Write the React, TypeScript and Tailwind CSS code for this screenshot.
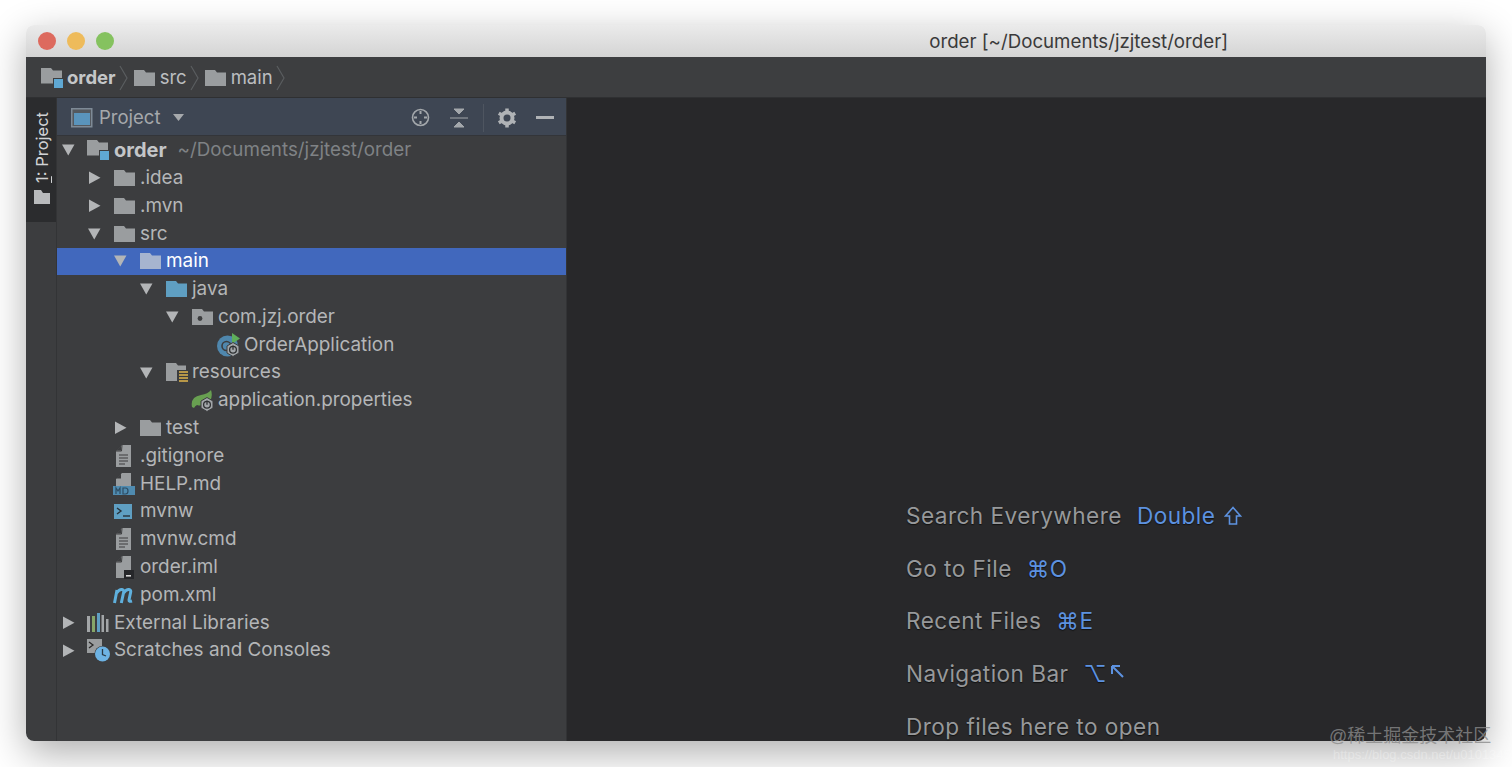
function Arrow({ open }: { open?: boolean }) {
  return (
    <svg width="14" height="14" viewBox="0 0 14 14" className="shrink-0">
      {open ? <path d="M0 1.500h12.500L6.250 12.500z" fill="#b3b5b7" /> : <path d="M1 .5v12.500L12.500 6.750z" fill="#b3b5b7" />}
    </svg>
  );
}

function Folder({ color = "#9a9d9f" }: { color?: string }) {
  return (
    <svg width="22" height="18" viewBox="0 0 22 18" className="shrink-0">
      <path d="M1 1h10l2 2.500h9v13.500H1z" fill={color} />
    </svg>
  );
}

function ModuleFolder() {
  return (
    <svg width="22" height="22" viewBox="0 0 22 22" className="shrink-0">
      <path d="M0 1h10l2 2.500h9v13H0z" fill="#9a9d9f" />
      <rect x="12" y="11" width="10" height="10" fill="#3c3d3f" />
      <rect x="13" y="12" width="9" height="9" fill="#5fa8d3" />
    </svg>
  );
}

function PackageFolder() {
  return (
    <svg width="22" height="18" viewBox="0 0 22 18" className="shrink-0">
      <path d="M1 1h10l2 2.500h9v13.500H1z" fill="#9a9d9f" />
      <circle cx="9" cy="10.500" r="2.400" fill="#3c3d3f" />
    </svg>
  );
}

function ResourceFolder() {
  return (
    <svg width="24" height="22" viewBox="0 0 24 22" className="shrink-0">
      <path d="M1 1h10l2 2.500h8v15.500H1z" fill="#9a9d9f" />
      <rect x="12" y="8" width="11" height="14" fill="#3c3d3f" />
      <path d="M14 10h9M14 13h9M14 16h9M14 19h9" stroke="#e0b54c" strokeWidth="1.600" />
    </svg>
  );
}

function Doc({ badge }: { badge?: boolean }) {
  return (
    <svg width="22" height="24" viewBox="0 0 22 24" className="shrink-0">
      <path d="M3 7l6-6h9v22H3z" fill="#9a9d9f" />
      <path d="M8 1.500v5H3z" fill="#3c3d3f" />
      <path d="M9 1l-.5 6H3" fill="none" stroke="#3c3d3f" strokeWidth="1" />
      {badge ? (
        <>
          <rect x="11" y="15" width="10" height="9" fill="#26272a" />
          <rect x="13" y="20" width="5" height="1.600" fill="#d8d8d8" />
        </>
      ) : (
        <path d="M6 11h9M6 14h9M6 17h9M6 20h6" stroke="#3c3d3f" strokeWidth="1.200" />
      )}
    </svg>
  );
}

function MdFile() {
  return (
    <svg width="22" height="24" viewBox="0 0 22 24" className="shrink-0">
      <path d="M3 7l6-6h9v13H3z" fill="#9a9d9f" />
      <path d="M8 1.500v5H3z" fill="#3c3d3f" />
      <rect x="0" y="14" width="22" height="9" fill="#4f8bb0" />
      <path d="M3 22v-6l2 3 2-3v6M10 16v6h2.500q2.500 0 2.500-3t-2.500-3z" fill="none" stroke="#2f4d63" strokeWidth="1.200" />
    </svg>
  );
}

function ShellFile() {
  return (
    <svg width="22" height="18" viewBox="0 0 22 18" className="shrink-0">
      <rect x="1" y="1" width="18" height="15" fill="#5f9fc2" />
      <path d="M4 5l4 3-4 3" fill="none" stroke="#27323a" strokeWidth="1.400" />
      <path d="M10 13h7" stroke="#27323a" strokeWidth="1.400" />
    </svg>
  );
}

function MavenIcon() {
  return (
    <svg width="22" height="18" viewBox="0 0 22 18" className="shrink-0">
      <path
        d="M1.500 17l2.500-13M3.500 7q3-4 5.500-3.500t1.500 3.500l-2.200 10M10.500 7q3-4 5.500-3.500t1.500 3.500l-1.500 7q-.3 2 3 1"
        fill="none"
        stroke="#5fb0dd"
        strokeWidth="3"
      />
    </svg>
  );
}

function SpringBadge() {
  return (
    <>
      <polygon points="16,9.500 22,13 22,20 16,23.500 10,20 10,13" fill="#a2a6a9" stroke="#3c3d3f" strokeWidth="1" />
      <circle cx="16" cy="16.800" r="3.400" fill="none" stroke="#2f3133" strokeWidth="1.300" />
      <path d="M16 12.500v4.300" stroke="#2f3133" strokeWidth="1.300" />
    </>
  );
}

function SpringApp() {
  return (
    <svg width="24" height="24" viewBox="0 0 24 24" className="shrink-0">
      <circle cx="10.500" cy="13" r="10.500" fill="#4f87ad" />
      <circle cx="9.500" cy="13" r="4.500" fill="none" stroke="#3c3d3f" strokeWidth="1.600" />
      <path d="M15 0l8 5.500-8 5.500z" fill="#5fae5a" />
      <SpringBadge />
    </svg>
  );
}

function SpringLeaf() {
  return (
    <svg width="24" height="24" viewBox="0 0 24 24" className="shrink-0">
      <path d="M1 19Q-1 9 10 7q7-1 10-5 2 6-1 11-6 6-13 4-2 1-3 3z" fill="#68a051" />
      <SpringBadge />
    </svg>
  );
}

function LibIcon() {
  return (
    <svg width="22" height="20" viewBox="0 0 22 20" className="shrink-0">
      <rect x="0" y="3" width="3" height="16" fill="#a3a6a8" />
      <rect x="5" y="3" width="3" height="16" fill="#86a668" />
      <rect x="10" y="0" width="3" height="19" fill="#5f9fc2" />
      <rect x="14.500" y="2" width="2.500" height="17" fill="#a3a6a8" />
      <rect x="19" y="6" width="2.500" height="13" fill="#a3a6a8" />
    </svg>
  );
}

function ScratchIcon() {
  return (
    <svg width="24" height="24" viewBox="0 0 24 24" className="shrink-0">
      <rect x="0" y="0" width="15" height="14" fill="#9a9d9f" />
      <path d="M2 3l4 3-4 3" fill="none" stroke="#2b2b2b" strokeWidth="1.300" />
      <circle cx="15.500" cy="15" r="8" fill="#3c3d3f" />
      <circle cx="15.500" cy="15" r="7.500" fill="#6db3e4" />
      <path d="M15.500 10v5.500l3.500 1.500" fill="none" stroke="#2b3a46" strokeWidth="1.300" />
    </svg>
  );
}

function Crumb({ icon, label, bold }: { icon: React.ReactNode; label: string; bold?: boolean }) {
  return (
    <div className="flex items-center">
      {icon}
      <span className={bold ? "ml-[4px] font-bold text-[#c4c6c8]" : "ml-[5px] text-[#bcbec0]"}>{label}</span>
      <svg width="10" height="26" viewBox="0 0 10 26" className="ml-[3px] mr-[4px]">
        <path d="M1 1l7 12-7 12" fill="none" stroke="#5a5d5f" strokeWidth="1.200" />
      </svg>
    </div>
  );
}

type Row = {
  pad: string;
  arrow?: "open" | "closed";
  icon: React.ReactNode;
  label: string;
  bold?: boolean;
  hint?: string;
  selected?: boolean;
};

const rows: Row[] = [
  { pad: "pl-[5px]", arrow: "open", icon: <ModuleFolder />, label: "order", bold: true, hint: "~/Documents/jzjtest/order" },
  { pad: "pl-[31px]", arrow: "closed", icon: <Folder />, label: ".idea" },
  { pad: "pl-[31px]", arrow: "closed", icon: <Folder />, label: ".mvn" },
  { pad: "pl-[31px]", arrow: "open", icon: <Folder />, label: "src" },
  { pad: "pl-[57px]", arrow: "open", icon: <Folder color="#a6b4cf" />, label: "main", selected: true },
  { pad: "pl-[83px]", arrow: "open", icon: <Folder color="#5f9fc2" />, label: "java" },
  { pad: "pl-[109px]", arrow: "open", icon: <PackageFolder />, label: "com.jzj.order" },
  { pad: "pl-[135px]", icon: <SpringApp />, label: "OrderApplication" },
  { pad: "pl-[83px]", arrow: "open", icon: <ResourceFolder />, label: "resources" },
  { pad: "pl-[109px]", icon: <SpringLeaf />, label: "application.properties" },
  { pad: "pl-[57px]", arrow: "closed", icon: <Folder />, label: "test" },
  { pad: "pl-[31px]", icon: <Doc />, label: ".gitignore" },
  { pad: "pl-[31px]", icon: <MdFile />, label: "HELP.md" },
  { pad: "pl-[31px]", icon: <ShellFile />, label: "mvnw" },
  { pad: "pl-[31px]", icon: <Doc />, label: "mvnw.cmd" },
  { pad: "pl-[31px]", icon: <Doc badge />, label: "order.iml" },
  { pad: "pl-[31px]", icon: <MavenIcon />, label: "pom.xml" },
  { pad: "pl-[5px]", arrow: "closed", icon: <LibIcon />, label: "External Libraries" },
  { pad: "pl-[5px]", arrow: "closed", icon: <ScratchIcon />, label: "Scratches and Consoles" },
];

function TreeRow({ row }: { row: Row }) {
  return (
    <div className={`flex h-[27.8px] items-center text-[18.900px] ${row.pad} ${row.selected ? "bg-[#4168bd] text-white" : "text-[#b4b6b8]"}`}>
      <div className="w-[14px] shrink-0">{row.arrow && <Arrow open={row.arrow === "open"} />}</div>
      <div className="ml-[11px] flex w-[22px] shrink-0 items-center justify-start">{row.icon}</div>
      <span className={`ml-[5px] whitespace-nowrap ${row.bold ? "text-[20px] font-bold text-[#c4c6c8]" : ""}`}>{row.label}</span>
      {row.hint && <span className="ml-[11px] whitespace-nowrap text-[18.800px] text-[#7f8285]">{row.hint}</span>}
    </div>
  );
}

function Tip({ label, keys }: { label: string; keys?: React.ReactNode }) {
  return (
    <div className="flex h-[52.700px] shrink-0 items-center whitespace-nowrap text-[22.600px] tracking-[0.45px] text-[#97999b] [text-shadow:0_1px_1px_#111]">
      <span>{label}</span>
      {keys && <span className="ml-[15px] text-[#5d92e0]">{keys}</span>}
    </div>
  );
}

export default function App() {
  return (
    <div className="relative h-[767px] w-[1512px] overflow-hidden bg-white pl-[26px] pr-[26px] pt-[25px] font-['Inter','Liberation_Sans',sans-serif] text-[18.500px]">
      <div className="flex h-[716px] w-[1460px] flex-col overflow-hidden rounded-[8px] shadow-[0_12px_38px_rgba(0,0,0,0.32)]">
        {/* title bar */}
        <div className="flex h-[32px] shrink-0 items-center bg-gradient-to-b from-[#ebebeb] to-[#d4d4d4] pl-[12px] pr-[258px] pt-[2px]">
          <div className="-mt-[2px] flex gap-[11px]">
            <div className="h-[18px] w-[18px] rounded-full bg-[#dd6a5e]" />
            <div className="h-[18px] w-[18px] rounded-full bg-[#eebb5b]" />
            <div className="h-[18px] w-[18px] rounded-full bg-[#85c25f]" />
          </div>
          <div className="ml-auto text-[18.700px] text-[#3a3a3a]">order [~/Documents/jzjtest/order]</div>
        </div>
        {/* breadcrumb */}
        <div className="flex h-[41px] shrink-0 items-center border-b border-[#2f3032] bg-[#3d3e40] pl-[15px] pt-px">
          <Crumb icon={<ModuleFolder />} label="order" bold />
          <Crumb icon={<Folder />} label="src" />
          <Crumb icon={<Folder />} label="main" />
        </div>
        <div className="flex min-h-0 flex-1">
          {/* tool window strip */}
          <div className="w-[31px] shrink-0 border-r border-[#333436] bg-[#3c3d3f]">
            <div className="flex h-[124px] w-[30px] flex-col items-center justify-end gap-[7px] bg-[#2b2c2e] pb-[18px] pl-[2px]">
              <span className="rotate-180 whitespace-nowrap text-[16.500px] text-[#d0d2d4] [writing-mode:vertical-rl]">
                <span className="underline">1</span>: Project
              </span>
              <svg width="18" height="14" viewBox="0 0 18 14">
                <path d="M1 0h7l2 3h7v11H1z" fill="#b8babc" />
              </svg>
            </div>
          </div>
          {/* project panel */}
          <div className="w-[510px] shrink-0 border-r border-[#323335] bg-[#3c3d3f]">
            <div className="flex h-[38px] items-center border-b border-[#333539] bg-[#3e4653] pl-[14px] pt-[2px] text-[#a6a9ac]">
              <svg width="22" height="20" viewBox="0 0 22 20">
                <rect x=".75" y=".75" width="20" height="18" fill="#54595f" stroke="#7e8a96" strokeWidth="1.500" />
                <rect x="3" y="5" width="16" height="12" fill="#5a94bc" />
              </svg>
              <span className="ml-[6px]">Project</span>
              <svg width="11" height="7" viewBox="0 0 11 7" className="ml-[13px]">
                <path d="M0 0h11L5.500 7z" fill="#a6a9ac" />
              </svg>
              <div className="ml-auto flex items-center">
                <svg width="19" height="19" viewBox="0 0 19 19">
                  <circle cx="9.500" cy="9.500" r="8" fill="none" stroke="#a3a7ab" strokeWidth="1.600" />
                  <path d="M9.500 3v3M9.500 13v3M3 9.500h3M13 9.500h3" stroke="#a3a7ab" strokeWidth="2" />
                </svg>
                <svg width="18" height="20" viewBox="0 0 18 20" className="ml-[20px]">
                  <path d="M4 1h10L9 6zM9 14l5 5H4zM0 10h18" fill="#a3a7ab" stroke="#a3a7ab" strokeWidth="1" />
                </svg>
                <div className="ml-[15px] h-[28px] w-px bg-[#4e5560]" />
                <svg width="20" height="20" viewBox="0 0 20 20" className="ml-[13px]">
                  <circle cx="10" cy="10" r="5.500" fill="none" stroke="#b0b3b6" strokeWidth="4" />
                  <path
                    d="M10 .5v3M10 16.500v3M1.800 5.200l2.600 1.500M15.600 13.300l2.600 1.500M1.800 14.800l2.600-1.500M15.600 6.700l2.600-1.500"
                    stroke="#b0b3b6"
                    strokeWidth="3.500"
                  />
                </svg>
                <div className="ml-[19px] mr-[12px] h-[2.500px] w-[18px] bg-[#b0b3b6]" />
              </div>
            </div>
            <div className="pt-[0.4px]">
              {rows.map((row) => (
                <TreeRow key={row.label} row={row} />
              ))}
            </div>
          </div>
          {/* editor */}
          <div className="flex min-w-0 flex-1 flex-col overflow-hidden bg-[#28282a] pl-[339px] pt-[391.600px]">
            <Tip
              label="Search Everywhere"
              keys={
                <span className="flex items-center gap-[9px]">
                  Double
                  <svg width="18" height="20" viewBox="0 0 18 20">
                    <path d="M9 1.500L1.500 10H5.500v8h7v-8h4z" fill="none" stroke="#5d92e0" strokeWidth="1.600" />
                  </svg>
                </span>
              }
            />
            <Tip label="Go to File" keys="⌘O" />
            <Tip label="Recent Files" keys="⌘E" />
            <Tip
              label="Navigation Bar"
              keys={
                <span className="flex items-center gap-[3px]">
                  ⌥
                  <svg width="15" height="15" viewBox="0 0 15 15" className="mb-[4px]">
                    <path d="M2 2h8M2 2v8M2 2l11 11" fill="none" stroke="#5d92e0" strokeWidth="2" />
                  </svg>
                </span>
              }
            />
            <Tip label="Drop files here to open" />
          </div>
        </div>
      </div>
      {/* watermark */}
      <div className="absolute left-[1329px] top-[723px] whitespace-nowrap font-['Liberation_Sans','Noto_Sans_CJK_SC',sans-serif] text-[18px] text-[#8a8a8a]/80">
        @稀土掘金技术社区
      </div>
      <div className="absolute left-[1333px] top-[745px] whitespace-nowrap font-['Liberation_Sans',sans-serif] text-[13px] text-white/30">
        https://blog.csdn.net/u0101345
      </div>
    </div>
  );
}
